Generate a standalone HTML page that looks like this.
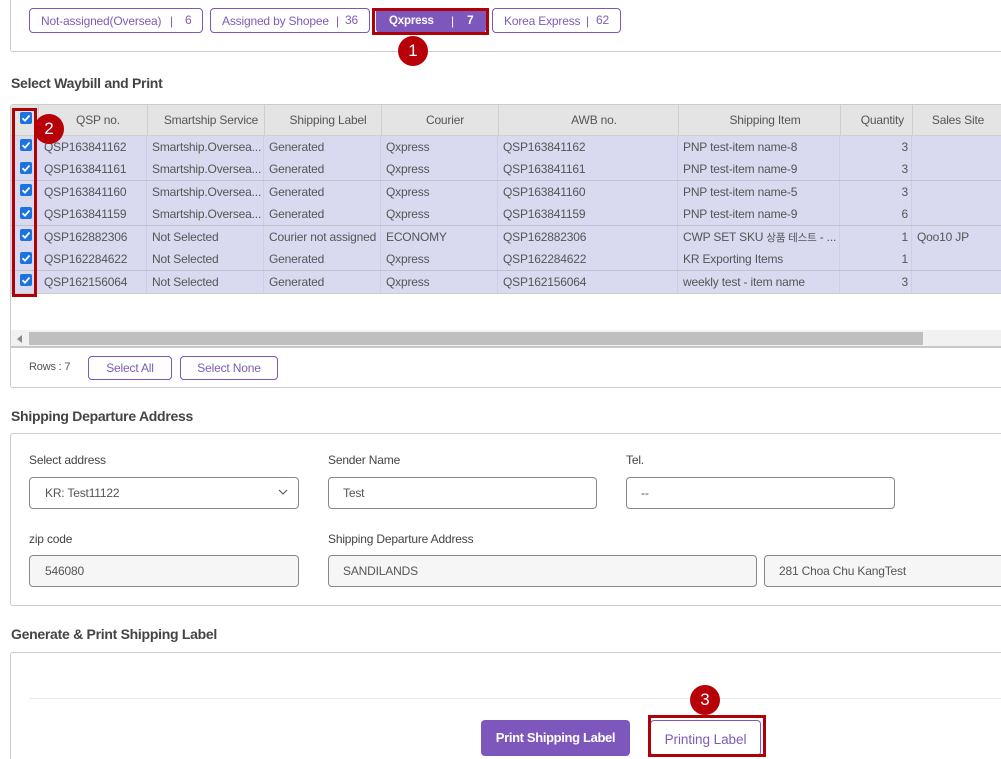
<!DOCTYPE html>
<html><head><meta charset="utf-8">
<style>
html,body{margin:0;padding:0;background:#fff;width:1001px;height:759px;overflow:hidden}
#w{left:0;top:0;width:1001px;height:759px;overflow:hidden;background:#fff;font-family:"Liberation Sans","Noto Sans CJK KR",sans-serif;font-size:12px;color:#555;letter-spacing:-.18px}
div{position:absolute;box-sizing:border-box}
.t{white-space:nowrap;line-height:16px;height:16px}
.c{transform:translateX(-50%)}
.r{transform:translateX(-100%)}
.h{font-size:14px;font-weight:bold;color:#444;line-height:18px;height:18px;white-space:nowrap;letter-spacing:-.28px}
.box{border:1px solid #ccc;border-radius:3px}
.tab{height:25px;top:8px;border:1px solid #7e57b8;border-radius:4px;background:#fff;color:#7e5cb5}
.pb{border:1px solid #7e57b8;border-radius:4px;background:#fff;color:#7e5cb5;text-align:center}
.red{border:3px solid #b00008}
.num{width:30px;height:30px;border-radius:50%;background:#b80008;color:#fff;font-size:17px;line-height:30px;text-align:center;letter-spacing:0}
.cb{left:20px;width:12px;height:12px;background:#1a73e0;border-radius:2px}
.cb svg{position:absolute;left:0;top:0}
.inp{height:32px;border:1px solid #888;border-radius:4px;background:#fff;line-height:30px;padding-left:14px;color:#555;white-space:nowrap;overflow:hidden}
.dis{background:#f6f6f6}
.lb{color:#444}
.vl{width:1px;background:#cdcee4;top:136px;height:157px}
.hl{width:1px;background:#cfcfcf;top:105px;height:30px}
.rl{left:11px;width:990px;height:1px;background:#c2c2ce}
.ko{font-size:10.5px}
</style></head><body>
<div id="w">

<div class="box" style="left:10px;top:-10px;width:1000px;height:62px"></div>
<div class="tab" style="left:29px;width:174px"></div>
<div class="t" style="left:41px;top:13px;color:#7e5cb5">Not-assigned(Oversea)</div>
<div class="t" style="left:170px;top:13px;color:#7e5cb5">|</div>
<div class="t" style="left:185px;top:12px;color:#7e5cb5">6</div>
<div class="tab" style="left:210px;width:160px"></div>
<div class="t" style="left:222px;top:13px;color:#7e5cb5">Assigned by Shopee</div>
<div class="t" style="left:336px;top:13px;color:#7e5cb5">|</div>
<div class="t" style="left:345px;top:12px;color:#7e5cb5">36</div>
<div class="tab" style="left:376px;width:110px;background:#7e57bd;border-color:#7e57bd"></div>
<div class="t" style="left:389px;top:13px;color:#fff;font-weight:bold;font-size:11.5px">Qxpress</div>
<div class="t" style="left:451px;top:13px;color:#fff">|</div>
<div class="t" style="left:467px;top:12px;color:#fff;font-weight:bold">7</div>
<div class="red" style="left:372px;top:8px;width:117px;height:27px"></div>
<div class="tab" style="left:492px;width:129px"></div>
<div class="t" style="left:504px;top:13px;color:#7e5cb5">Korea Express</div>
<div class="t" style="left:586px;top:13px;color:#7e5cb5">|</div>
<div class="t" style="left:596px;top:12px;color:#7e5cb5">62</div>

<div class="h" style="left:11px;top:74px">Select Waybill and Print</div>

<div class="box" style="left:10px;top:104px;width:1000px;height:284px"></div>
<div style="left:11px;top:105px;width:990px;height:30px;background:#e4e4e4"></div>
<div style="left:11px;top:135px;width:990px;height:1px;background:#cfcfcf"></div>
<div style="left:11px;top:136px;width:990px;height:157px;background:#d9daf0"></div>
<div class="hl" style="left:38px"></div><div class="hl" style="left:147px"></div><div class="hl" style="left:264px"></div><div class="hl" style="left:381px"></div><div class="hl" style="left:498px"></div><div class="hl" style="left:678px"></div><div class="hl" style="left:840px"></div><div class="hl" style="left:912px"></div>
<div class="vl" style="left:146px"></div><div class="vl" style="left:263px"></div><div class="vl" style="left:380px"></div><div class="vl" style="left:497px"></div><div class="vl" style="left:677px"></div><div class="vl" style="left:839px"></div><div class="vl" style="left:911px"></div>
<div class="rl" style="top:180px"></div><div class="rl" style="top:225px"></div><div class="rl" style="top:270px"></div><div class="rl" style="top:293px;background:#ccc"></div>

<div style="left:0;top:1px;width:1001px;height:300px">
<div class="t c" style="left:98px;top:111px">QSP no.</div>
<div class="t c" style="left:211px;top:111px">Smartship Service</div>
<div class="t c" style="left:328px;top:111px">Shipping Label</div>
<div class="t c" style="left:445px;top:111px">Courier</div>
<div class="t c" style="left:594px;top:111px">AWB no.</div>
<div class="t c" style="left:765px;top:111px">Shipping Item</div>
<div class="t r" style="left:904px;top:111px">Quantity</div>
<div class="t c" style="left:958px;top:111px">Sales Site</div>

<div class="t" style="left:44px;top:138px">QSP163841162</div><div class="t" style="left:152px;top:138px">Smartship.Oversea...</div><div class="t" style="left:269px;top:138px">Generated</div><div class="t" style="left:386px;top:138px">Qxpress</div><div class="t" style="left:503px;top:138px">QSP163841162</div><div class="t" style="left:683px;top:138px">PNP test-item name-8</div><div class="t r" style="left:908px;top:138px">3</div>
<div class="t" style="left:44px;top:160px">QSP163841161</div><div class="t" style="left:152px;top:160px">Smartship.Oversea...</div><div class="t" style="left:269px;top:160px">Generated</div><div class="t" style="left:386px;top:160px">Qxpress</div><div class="t" style="left:503px;top:160px">QSP163841161</div><div class="t" style="left:683px;top:160px">PNP test-item name-9</div><div class="t r" style="left:908px;top:160px">3</div>
<div class="t" style="left:44px;top:183px">QSP163841160</div><div class="t" style="left:152px;top:183px">Smartship.Oversea...</div><div class="t" style="left:269px;top:183px">Generated</div><div class="t" style="left:386px;top:183px">Qxpress</div><div class="t" style="left:503px;top:183px">QSP163841160</div><div class="t" style="left:683px;top:183px">PNP test-item name-5</div><div class="t r" style="left:908px;top:183px">3</div>
<div class="t" style="left:44px;top:205px">QSP163841159</div><div class="t" style="left:152px;top:205px">Smartship.Oversea...</div><div class="t" style="left:269px;top:205px">Generated</div><div class="t" style="left:386px;top:205px">Qxpress</div><div class="t" style="left:503px;top:205px">QSP163841159</div><div class="t" style="left:683px;top:205px">PNP test-item name-9</div><div class="t r" style="left:908px;top:205px">6</div>
<div class="t" style="left:44px;top:228px">QSP162882306</div><div class="t" style="left:152px;top:228px">Not Selected</div><div class="t" style="left:269px;top:228px">Courier not assigned</div><div class="t" style="left:386px;top:228px">ECONOMY</div><div class="t" style="left:503px;top:228px">QSP162882306</div><div class="t" style="left:683px;top:228px">CWP SET SKU <span class="ko">상품 테스트</span> - ...</div><div class="t r" style="left:908px;top:228px">1</div><div class="t" style="left:917px;top:228px">Qoo10 JP</div>
<div class="t" style="left:44px;top:250px">QSP162284622</div><div class="t" style="left:152px;top:250px">Not Selected</div><div class="t" style="left:269px;top:250px">Generated</div><div class="t" style="left:386px;top:250px">Qxpress</div><div class="t" style="left:503px;top:250px">QSP162284622</div><div class="t" style="left:683px;top:250px">KR Exporting Items</div><div class="t r" style="left:908px;top:250px">1</div>
<div class="t" style="left:44px;top:273px">QSP162156064</div><div class="t" style="left:152px;top:273px">Not Selected</div><div class="t" style="left:269px;top:273px">Generated</div><div class="t" style="left:386px;top:273px">Qxpress</div><div class="t" style="left:503px;top:273px">QSP162156064</div><div class="t" style="left:683px;top:273px">weekly test - item name</div><div class="t r" style="left:908px;top:273px">3</div>
</div>

<div class="cb" style="top:112px"><svg width="12" height="12"><path d="M2.5 6.2L5 8.7L9.5 3.5" stroke="#fff" stroke-width="1.8" fill="none"/></svg></div>
<div class="cb" style="top:139px"><svg width="12" height="12"><path d="M2.5 6.2L5 8.7L9.5 3.5" stroke="#fff" stroke-width="1.8" fill="none"/></svg></div>
<div class="cb" style="top:162px"><svg width="12" height="12"><path d="M2.5 6.2L5 8.7L9.5 3.5" stroke="#fff" stroke-width="1.8" fill="none"/></svg></div>
<div class="cb" style="top:184px"><svg width="12" height="12"><path d="M2.5 6.2L5 8.7L9.5 3.5" stroke="#fff" stroke-width="1.8" fill="none"/></svg></div>
<div class="cb" style="top:207px"><svg width="12" height="12"><path d="M2.5 6.2L5 8.7L9.5 3.5" stroke="#fff" stroke-width="1.8" fill="none"/></svg></div>
<div class="cb" style="top:229px"><svg width="12" height="12"><path d="M2.5 6.2L5 8.7L9.5 3.5" stroke="#fff" stroke-width="1.8" fill="none"/></svg></div>
<div class="cb" style="top:252px"><svg width="12" height="12"><path d="M2.5 6.2L5 8.7L9.5 3.5" stroke="#fff" stroke-width="1.8" fill="none"/></svg></div>
<div class="cb" style="top:274px"><svg width="12" height="12"><path d="M2.5 6.2L5 8.7L9.5 3.5" stroke="#fff" stroke-width="1.8" fill="none"/></svg></div>
<div class="red" style="left:12px;top:108px;width:25px;height:189px"></div>

<div style="left:11px;top:330px;width:990px;height:17px;background:#f1f1f1"></div>
<div style="left:29px;top:332px;width:894px;height:13px;background:#bfbfbf"></div>
<svg style="position:absolute;left:17px;top:335px" width="6" height="8"><path d="M5 0V8L0 4Z" fill="#8a8a8a"/></svg>
<div style="left:11px;top:346px;width:990px;height:2px;background:#c8c8c8"></div>

<div class="t" style="left:29px;top:359px;font-size:11px;color:#555">Rows : 7</div>
<div class="pb" style="left:88px;top:356px;width:84px;height:24px;line-height:23px">Select All</div>
<div class="pb" style="left:180px;top:356px;width:98px;height:24px;line-height:23px">Select None</div>

<div class="h" style="left:11px;top:407px">Shipping Departure Address</div>
<div class="box" style="left:10px;top:433px;width:1000px;height:173px"></div>
<div class="t lb" style="left:29px;top:452px">Select address</div>
<div class="t lb" style="left:328px;top:452px">Sender Name</div>
<div class="t lb" style="left:626px;top:452px">Tel.</div>
<div class="inp" style="left:29px;top:477px;width:270px;padding-left:15px">KR: Test11122</div>
<svg style="position:absolute;left:278px;top:489px" width="10" height="7"><path d="M1 1L5 5L9 1" stroke="#555" stroke-width="1.1" fill="none"/></svg>
<div class="inp" style="left:328px;top:477px;width:269px">Test</div>
<div class="inp" style="left:626px;top:477px;width:269px">--</div>
<div class="t lb" style="left:29px;top:531px">zip code</div>
<div class="t lb" style="left:328px;top:531px">Shipping Departure Address</div>
<div class="inp dis" style="left:29px;top:555px;width:270px;padding-left:15px">546080</div>
<div class="inp dis" style="left:328px;top:555px;width:429px">SANDILANDS</div>
<div class="inp dis" style="left:764px;top:555px;width:260px">281 Choa Chu KangTest</div>

<div class="h" style="left:11px;top:625px">Generate &amp; Print Shipping Label</div>
<div class="box" style="left:10px;top:652px;width:1000px;height:130px"></div>
<div style="left:29px;top:698px;width:972px;height:1px;background:#e8e8e8"></div>
<div style="left:481px;top:720px;width:149px;height:36px;background:#7e57bd;border-radius:4px;color:#fff;font-weight:bold;font-size:13px;letter-spacing:-.35px;line-height:36px;text-align:center;white-space:nowrap">Print Shipping Label</div>
<div class="pb" style="left:650px;top:720px;width:111px;height:36px;line-height:37px;font-size:13.5px;letter-spacing:-.05px">Printing Label</div>
<div class="red" style="left:648px;top:715px;width:118px;height:42px"></div>

<div class="num" style="left:398px;top:36px">1</div>
<div class="num" style="left:34px;top:114px">2</div>
<div class="num" style="left:690px;top:685px">3</div>
</div>
</body></html>
